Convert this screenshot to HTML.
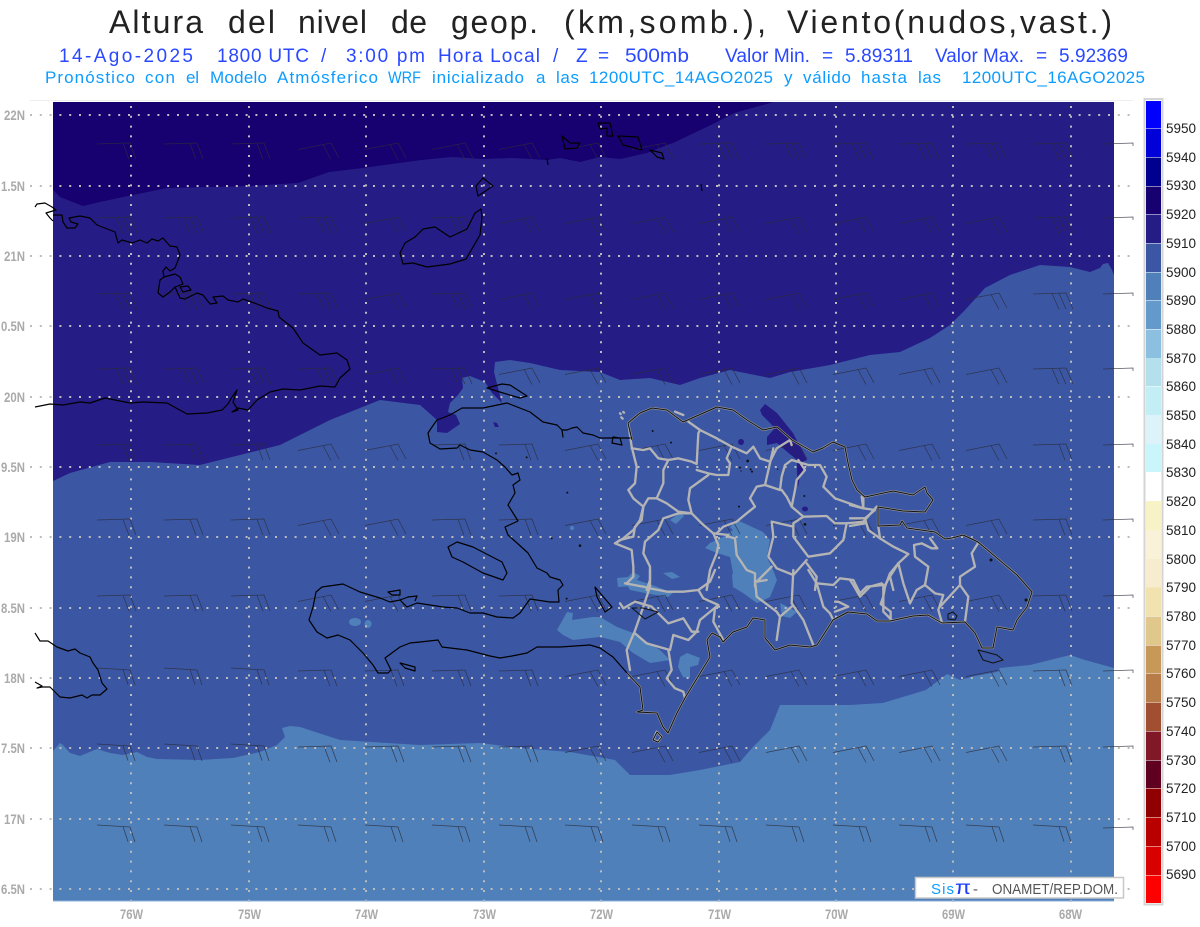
<!DOCTYPE html>
<html lang="es"><head><meta charset="utf-8"><title>Altura del nivel de geop.</title>
<style>html,body{margin:0;padding:0;background:#fff}svg{display:block}text{font-family:"Liberation Sans",sans-serif}
.t1{font-size:32px;fill:#222}.t2{font-size:19px;fill:#2a48ff}.t3{font-size:17px;fill:#0c9cff}
.ax{font-size:13.5px;font-weight:bold;fill:#aaaaaa}.lg{font-size:13.500px;fill:#222}</style></head><body>
<svg width="1200" height="927" viewBox="0 0 1200 927" xmlns="http://www.w3.org/2000/svg">
<defs>
<clipPath id="mc"><rect x="0" y="0" width="1134" height="927"/></clipPath>
<path id="f" d="M-33 1L0 0l6 16M-7 .2l6 16"/>
<path id="h" d="M-33 1L0 0l7 16M-7 .2l7 16M-14 .4l7 16"/>
<path id="u" d="M-33 6.5L0 0l8 15M-8 1.5l8 15"/>
<path id="d" d="M-33-2L0 0l5 15M-7-.4l5 15"/>
<path id="s" d="M-30 1L0 0v3"/>
<g id="r1"><use href="#f" x="130"/><use href="#f" x="197"/><use href="#f" x="264"/><use href="#u" x="331"/><use href="#u" x="398"/><use href="#u" x="465"/><use href="#u" x="532"/><use href="#u" x="598"/><use href="#u" x="665"/><use href="#h" x="732"/><use href="#h" x="799"/><use href="#h" x="866"/><use href="#h" x="932"/><use href="#h" x="999"/><use href="#h" x="1066"/><use href="#s" x="1133"/></g>
<g id="r2"><use href="#h" x="130"/><use href="#h" x="197"/><use href="#h" x="264"/><use href="#h" x="331"/><use href="#u" x="398"/><use href="#h" x="465"/><use href="#u" x="532"/><use href="#u" x="598"/><use href="#u" x="665"/><use href="#u" x="732"/><use href="#u" x="799"/><use href="#u" x="866"/><use href="#u" x="932"/><use href="#u" x="999"/><use href="#h" x="1066"/><use href="#s" x="1133"/></g>
<g id="r3"><use href="#f" x="130"/><use href="#f" x="197"/><use href="#f" x="264"/><use href="#u" x="331"/><use href="#u" x="398"/><use href="#f" x="465"/><use href="#f" x="532"/><use href="#u" x="598"/><use href="#u" x="665"/><use href="#u" x="732"/><use href="#u" x="799"/><use href="#u" x="866"/><use href="#u" x="932"/><use href="#u" x="999"/><use href="#f" x="1066"/><use href="#s" x="1133"/></g>
<g id="r4"><use href="#d" x="130"/><use href="#d" x="197"/><use href="#d" x="264"/><use href="#f" x="331"/><use href="#f" x="398"/><use href="#f" x="465"/><use href="#f" x="532"/><use href="#u" x="598"/><use href="#u" x="665"/><use href="#u" x="732"/><use href="#u" x="799"/><use href="#u" x="866"/><use href="#u" x="932"/><use href="#u" x="999"/><use href="#f" x="1066"/><use href="#s" x="1133"/></g>
<g id="r5"><use href="#d" x="130"/><use href="#d" x="197"/><use href="#d" x="264"/><use href="#d" x="331"/><use href="#d" x="398"/><use href="#d" x="465"/><use href="#d" x="532"/><use href="#d" x="598"/><use href="#d" x="665"/><use href="#d" x="732"/><use href="#d" x="799"/><use href="#d" x="866"/><use href="#d" x="932"/><use href="#d" x="999"/><use href="#d" x="1066"/><use href="#s" x="1133"/></g>
</defs>

<!-- titles -->
<text class="t1" x="109" y="33" textLength="94" lengthAdjust="spacing">Altura</text>
<text class="t1" x="228" y="33" textLength="47" lengthAdjust="spacing">del</text>
<text class="t1" x="298" y="33" textLength="69" lengthAdjust="spacing">nivel</text>
<text class="t1" x="391" y="33" textLength="36" lengthAdjust="spacing">de</text>
<text class="t1" x="451" y="33" textLength="87" lengthAdjust="spacing">geop.</text>
<text class="t1" x="564" y="33" textLength="202" lengthAdjust="spacing">(km,somb.),</text>
<text class="t1" x="787" y="33" textLength="325" lengthAdjust="spacing">Viento(nudos,vast.)</text>

<text class="t2" x="59" y="62" textLength="134" lengthAdjust="spacing">14-Ago-2025</text>
<text class="t2" x="217" y="62" textLength="92" lengthAdjust="spacing">1800 UTC</text>
<text class="t2" x="321" y="62">/</text>
<text class="t2" x="346" y="62" textLength="79" lengthAdjust="spacing">3:00 pm</text>
<text class="t2" x="438" y="62" textLength="102" lengthAdjust="spacing">Hora Local</text>
<text class="t2" x="553" y="62">/</text>
<text class="t2" x="576" y="62">Z</text>
<text class="t2" x="598" y="62">=</text>
<text class="t2" x="625" y="62" textLength="64" lengthAdjust="spacingAndGlyphs">500mb</text>
<text class="t2" x="725" y="62" textLength="85" lengthAdjust="spacingAndGlyphs">Valor Min.</text>
<text class="t2" x="822" y="62">=</text>
<text class="t2" x="845" y="62" textLength="68" lengthAdjust="spacing">5.89311</text>
<text class="t2" x="935" y="62" textLength="89" lengthAdjust="spacingAndGlyphs">Valor Max.</text>
<text class="t2" x="1036" y="62">=</text>
<text class="t2" x="1059" y="62" textLength="69" lengthAdjust="spacing">5.92369</text>

<text class="t3" x="45" y="83" textLength="90" lengthAdjust="spacing">Pronóstico</text>
<text class="t3" x="145" y="83" textLength="30" lengthAdjust="spacing">con</text>
<text class="t3" x="186" y="83" textLength="13" lengthAdjust="spacing">el</text>
<text class="t3" x="210" y="83" textLength="57" lengthAdjust="spacing">Modelo</text>
<text class="t3" x="277" y="83" textLength="101" lengthAdjust="spacing">Atmósferico</text>
<text class="t3" x="388" y="83" textLength="33" lengthAdjust="spacingAndGlyphs">WRF</text>
<text class="t3" x="432" y="83" textLength="92" lengthAdjust="spacing">inicializado</text>
<text class="t3" x="536" y="83" textLength="10" lengthAdjust="spacing">a</text>
<text class="t3" x="556" y="83" textLength="23" lengthAdjust="spacing">las</text>
<text class="t3" x="589" y="83" textLength="184" lengthAdjust="spacing">1200UTC_14AGO2025</text>
<text class="t3" x="784" y="83" textLength="8" lengthAdjust="spacing">y</text>
<text class="t3" x="803" y="83" textLength="48" lengthAdjust="spacing">válido</text>
<text class="t3" x="861" y="83" textLength="46" lengthAdjust="spacing">hasta</text>
<text class="t3" x="918" y="83" textLength="23" lengthAdjust="spacing">las</text>
<text class="t3" x="962" y="83" textLength="183" lengthAdjust="spacing">1200UTC_16AGO2025</text>

<line x1="30" y1="100.500" x2="1133" y2="100.500" stroke="#eeeeee"/>

<!-- contour fills -->
<rect x="53" y="102" width="1061" height="799" fill="#4f80ba"/>
<path fill="#3b57a4" d="M53 102H1114V668L1085 660 1070 655 1030 665 1000 668 997 672 975 676 960 680 947 674 926 690 883 703 850 705 780 705 770 730 753 747 740 762 700 770 670 775 630 775 615 760 570 752 520 748 480 743 420 745 340 740 300 727 290 726 282 728 285 737 277 745 260 752 233 758 200 760 157 759 147 757 137 752 123 755 110 753 97 749 80 756 70 753 63 745 60 743 53 751Z"/>
<path fill="#261c85" d="M53 102H1114V275L1112 270 1108 263 1103 264 1100 268 1090 272 1070 267 1040 265 1010 275 985 288 965 310 950 325 930 338 900 352 870 355 830 365 790 372 770 378 730 370 700 378 680 385 650 378 620 380 600 372 560 370 530 363 510 360 495 362 494 372 498 388 502 403 492 393 485 382 470 376 462 378 463 388 458 395 450 403 448 412 456 415 460 424 447 433 437 432 437 420 428 412 420 405 380 400 330 420 280 445 240 455 200 465 150 462 110 462 70 473 53 481Z"/>
<path fill="#170070" d="M53 102H774L734 113 715 123 673 143 667 145 647 153 620 159 600 157 580 162 560 158 547 160 513 158 482 159 452 157 421 160 363 168 329 172 298 183 250 186 167 188 133 195 100 202 83 206 60 197 53 190Z"/>
<!-- light patches -->
<g fill="#4f80ba">
<path d="M557 630 567 612 573 613 572 620 593 617 600 617 617 627 633 633 660 650 670 660 650 663 633 653 620 642 600 637 573 640 563 635Z"/>
<path d="M678 667 680 657 687 653 700 658 698 665 690 667 690 678 683 677Z"/>
<path d="M730 527 737 520 763 532 770 540 767 557 773 570 777 580 770 597 757 603 743 593 733 587 732 575 733 573 730 557 717 553 705 548 710 543 723 537 733 530Z"/>
<path d="M625 582 637 580 655 586 673 593 668 597 650 594 630 590Z"/>
<path d="M617 578 628 577 633 572 640 576 632 586 618 587Z"/>
<path d="M663 573 672 572 680 577 672 579Z"/>
<path d="M780 603 790 608 797 612 790 618 782 616Z"/>
<path d="M670 520 680 513 684 516 676 524Z"/>
<ellipse cx="355" cy="622" rx="6" ry="4"/><ellipse cx="368" cy="624" rx="3.500" ry="4"/>
<circle cx="572" cy="528" r="2"/>
</g>
<!-- dark patches -->
<g fill="#261c85">
<path d="M760 410 765 404 777 413 793 433 807 460 800 463 805 466 800 476 798 487 797 473 797 460 785 450 777 443 767 445 767 437 775 428 762 415Z"/>
<ellipse cx="741" cy="442" rx="3" ry="3"/><ellipse cx="805" cy="509" rx="3" ry="2.500"/>
<path d="M493 422 497 423 499 427 495 427Z"/>
</g>

<!-- grid -->
<g stroke="#bcbcbc" stroke-width="2" stroke-dasharray="2 7.800" fill="none">
<path d="M30 115H1133M30 186H1133M30 256H1133M30 326H1133M30 397H1133M30 467H1133M30 537H1133M30 608H1133M30 678H1133M30 748H1133M30 819H1133M30 889H1133"/>
<path d="M131 106V912M249 106V912M366 106V912M484 106V912M601 106V912M719 106V912M836 106V912M953 106V912M1071 106V912"/>
</g>
<rect x="53" y="900.500" width="1061" height="1" fill="#8db0da"/>

<!-- wind barbs -->
<g clip-path="url(#mc)" fill="none" stroke="#2c2c3a" stroke-width=".75" stroke-opacity=".8">
<use href="#r1" y="143"/><use href="#r2" y="217"/><use href="#r2" y="293"/><use href="#r2" y="368"/>
<use href="#r3" y="444"/><use href="#r3" y="519"/><use href="#r3" y="595"/><use href="#r4" y="670"/>
<use href="#r4" y="746"/><use href="#r5" y="827"/>
</g>

<!-- province lines -->
<g fill="none" stroke="#b4b4b4" stroke-linejoin="round" stroke-linecap="round">
<g transform="translate(600 390) scale(.33333)" stroke-width="7">
<path d="M265 95 300 120 350 145 395 170 440 190 460 170 480 205 510 215 530 175 570 150 575 165"/>
<path d="M520 175 495 285 470 290 450 325 465 350 440 370 410 395 370 410 350 430"/>
<path d="M95 175 130 180 150 175 175 205 205 210 235 205 275 215 290 222 295 130 300 120"/>
<path d="M205 210 190 240 190 280 170 325 200 340 235 365 275 370"/>
<path d="M290 240 325 250 350 255 385 255 390 220 380 205 395 170"/>
<path d="M325 255 270 295 265 330 275 370 305 400 340 430 385 435"/>
<path d="M170 325 145 325 130 350 125 390 105 410 100 440 60 450 45 460"/>
<path d="M275 370 235 370 190 385 175 420 135 455 130 490 150 530 150 570 140 600"/>
<path d="M340 430 355 465 350 490 330 540 320 600"/>
<path d="M385 440 405 445 410 495 440 540 465 550 465 590"/>
<path d="M495 285 540 300 545 260 555 225 575 210 625 225"/>
<path d="M595 210 615 240 590 270 585 300 575 350"/>
<path d="M545 300 560 320 575 350 610 380 680 378 705 400 740 400 790 395 830 350"/>
<path d="M785 320 790 355 705 325 670 290 680 260 660 225 625 225"/>
<path d="M610 380 580 400 580 440 610 480 625 500 690 490 730 450 740 400"/>
<path d="M580 410 515 395 520 440 505 500 530 535 580 555 620 510"/>
<path d="M515 530 470 575 500 570"/>
<path d="M620 520 650 560 645 600"/>
<path d="M895 520 870 560 880 600"/>
<path d="M85 100 95 170 110 230 105 280 85 300 100 325 130 350 120 390 100 420 70 445 45 460 95 480 100 530 100 560 80 580"/>
<path d="M60 70 62 72M70 66 72 68M64 82 68 86M225 65 250 75"/>
</g>
<g transform="translate(600 570) scale(.33333)" stroke-width="7">
<path d="M75 40 130 50 150 55 200 65 250 65 295 60 330 35 345 0"/>
<path d="M150 0 150 50 130 110 105 182 80 240 90 300"/>
<path d="M295 60 310 85 355 105 300 150 290 185 265 210 220 195 210 240 140 220 105 190"/>
<path d="M205 240 215 300 200 325 225 355 250 365 255 385"/>
<path d="M60 100 70 115 105 95 155 110 205 160 250 145 275 185 295 185"/>
<path d="M345 115 340 155 370 210"/>
<path d="M465 30 470 80 530 125 540 140 530 210"/>
<path d="M580 0 575 100 610 150 640 225M575 110 540 140"/>
<path d="M625 0 650 40 670 110 690 130 700 150"/>
<path d="M650 40 700 45 720 25 760 30 780 70 800 50 850 45 850 125 875 150"/>
<path d="M850 55 880 0M705 95 715 95 745 110 705 125"/>
<path d="M160 510 170 485 185 500 175 515Z"/>
</g>
<g transform="translate(850 450) scale(.33333)" stroke-width="7">
<path d="M0 165 40 175 75 180 45 205 55 240 90 265 130 290 175 312 145 340"/>
<path d="M40 145 40 170M0 205 45 205M0 228 45 220M90 265 85 230"/>
<path d="M145 340 120 370 105 410 95 400 60 410 30 440 10 405 0 390"/>
<path d="M105 410 100 440 92 462 122 485 122 512"/>
<path d="M145 340 160 400 180 460 200 420 225 405 255 430 280 435 265 480 275 515"/>
<path d="M225 405 235 350 195 320 192 285 215 280 245 295 262 295 240 265"/>
<path d="M330 405 355 440 345 515M330 405 270 470M330 405 330 380 375 350 365 310 385 278"/>
</g>
</g>

<!-- coasts -->
<g fill="none" stroke="#000" stroke-width="1.200" stroke-linejoin="round">
<path d="M35 207 37 204 45 203 52 207 56 210 46 213 50 218 53 221"/>
<path d="M53 215 62 215 63 222 67 228 75 228 78 224 71 222 69 218 80 216 90 218 97 225 115 232 118 243 122 240 132 243 140 240 147 243 152 239 158 241 163 238 170 246 177 247 180 255 175 268 170 271 166 267 163 271 164 277 175 274 180 277 183 284 175 287 170 292 163 297 158 293 160 280 164 277M175 287 180 298 185 299 197 293 203 295 210 304 217 303 213 297 223 296 228 300 238 302 243 299 257 304 267 308 278 311 279 317 293 328 303 343 320 355 337 353 347 360 350 369 340 378 335 387 320 386 300 390 283 389 270 392 257 400 248 410 238 408 232 412 238 410 233 402 237 390 232 397 228 404 222 410 207 413 187 414 167 403 143 402 130 403 105 398 90 403 80 402 63 405 50 404 35 407"/>
<path d="M180 287 188 286 191 290 183 292Z"/>
<path d="M35 633 40 641 48 641 57 647 68 651 75 649 80 653 90 657 93 663 98 670 102 683 107 689 100 695 92 695 87 698 82 695 70 698 60 697 50 687 42 687 37 688 42 686 35 682"/>
<path d="M400 253 405 243 415 237 423 229 435 227 450 237 467 229 475 213 481 209 482 217 480 235 466 259 450 264 427 267 413 263 403 264Z"/>
<path d="M476 186 483 178 493 186 478 196Z"/>
<path d="M562 136 570 143 580 143 577 148 565 149Z"/>
<path d="M598 123 610 123 613 136 607 136 607 128 600 129Z"/>
<path d="M618 136 638 137 642 150 623 145Z"/>
<path d="M650 150 662 153 664 159 657 157Z"/>
<path d="M547 158 548 165M701 184 702 191"/>
<path d="M487 388 502 384 510 385 527 396 520 398 503 393Z"/>
<path d="M633 438 620 438 613 437 612 443 622 445 620 438M620 438 600 438 593 435 583 433 577 427 572 428 567 430 562 430 563 437 562 430 557 425 543 422 530 412 507 403 483 408 462 408 450 415 437 420 432 427 428 433 430 443 440 449 457 448 460 445 470 450 483 452 497 460 505 467 512 475 518 473 520 480 513 485 515 493 508 505 513 513 518 521 505 527 508 535 517 543 528 553 537 568 547 573 550 577 560 580 563 585 558 590 559 602 550 602 530 599 520 613 513 618 497 617 483 613 470 613 457 608 443 607 417 603 407 607 400 600 390 602 380 598 370 595 360 592 343 584 322 587 316 592 313 607 309 620 317 632 327 638 338 635 350 640 363 653 373 665 378 673 388 673 391 670 385 658 400 647 410 643 420 642 438 640 442 647 467 650 490 656 500 658 512 656 527 653 537 647 560 647 590 645 600 648 613 657 627 673"/>
<path d="M448 547 457 542 473 547 502 562 507 573 503 580 483 573 463 562 452 557Z"/>
<path d="M595 587 612 607 605 612 597 597Z"/>
<path d="M400 663 415 667 415 671 405 668Z"/>
<path d="M388 592 400 590 400 595 392 595Z"/>
<path d="M400 600 408 597 417 596 415 601"/>
</g>
<g fill="none" stroke-linejoin="round">
<path stroke="#9a9a9a" stroke-width="2.200" d="M627 673 640 687 643 710 637 712 657 713 663 727 668 733 677 713 685 698 707 662 710 657 707 640 712 633 720 637 723 642 733 632 747 627 753 618 765 620 765 638 775 650 790 645 810 647 817 645 833 620 848 612 867 614 877 621 890 621 913 616 928 615 942 623 965 622 975 633 982 648 993 648 997 627 1013 630 1017 620 1027 607 1032 592 1017 575 997 558 978 542 963 535 952 538 945 539 935 532 907 528 902 521 900 525 878 526 878 507 903 511 925 512 933 500 927 493 925 487 913 495 893 491 865 497 857 490 852 480 848 463 845 447 833 442 823 448 813 452 792 440 777 427 763 430 747 420 733 410 717 407 683 422 667 410 652 408 640 413 628 423 632 440"/>
<g stroke="#111" stroke-width="1">
<path d="M627 673 640 687 643 710 637 712 657 713 663 727 668 733 677 713 685 698 707 662 710 657 707 640 712 633 720 637 723 642 733 632 747 627 753 618 765 620 765 638 775 650 790 645 810 647 817 645 833 620 848 612 867 614 877 621 890 621 913 616 928 615 942 623 965 622 975 633 982 648 993 648 997 627 1013 630 1017 620 1027 607 1032 592 1017 575 997 558 978 542 963 535 952 538 945 539 935 532 907 528 902 521 900 525 878 526 878 507 903 511 925 512 933 500 927 493 925 487 913 495 893 491 865 497 857 490 852 480 848 463 845 447 833 442 823 448 813 452 792 440 777 427 763 430 747 420 733 410 717 407 683 422 667 410 652 408 640 413 628 423 632 440"/>
<path d="M978 650 997 655 1003 660 993 663 983 660Z"/>
<path d="M653 740 657 732 662 737 658 742Z"/>
<path d="M948 614 953 612 957 616 955 620 948 619Z"/>
<path d="M632 608 643 608 658 612 645 619Z"/>
</g>
</g>
<g fill="#111">
<g transform="translate(600 390) scale(.33333)">
<circle cx="158" cy="123" r="3"/><circle cx="213" cy="158" r="3"/><circle cx="443" cy="213" r="4"/><circle cx="420" cy="233" r="3"/><circle cx="423" cy="243" r="2"/><circle cx="452" cy="238" r="3"/><circle cx="456" cy="245" r="3"/><circle cx="533" cy="238" r="2"/><circle cx="613" cy="318" r="3"/><circle cx="417" cy="350" r="3"/><circle cx="615" cy="403" r="4"/>
</g>
<g transform="translate(420 370) scale(.33333)">
<circle cx="228" cy="250" r="3"/><circle cx="320" cy="262" r="3"/><circle cx="442" cy="368" r="3"/><circle cx="395" cy="505" r="3"/><circle cx="480" cy="527" r="4"/><circle cx="440" cy="686" r="3"/>
</g>
<circle cx="991" cy="560" r="1.500"/><circle cx="1026" cy="600" r="1.500"/>
</g>

<!-- axis labels -->
<text class="ax" x="4" y="120" textLength="21" lengthAdjust="spacingAndGlyphs">22N</text>
<text class="ax" x="1" y="191" textLength="24" lengthAdjust="spacingAndGlyphs">1.5N</text>
<text class="ax" x="4" y="261" textLength="21" lengthAdjust="spacingAndGlyphs">21N</text>
<text class="ax" x="1" y="331" textLength="24" lengthAdjust="spacingAndGlyphs">0.5N</text>
<text class="ax" x="4" y="402" textLength="21" lengthAdjust="spacingAndGlyphs">20N</text>
<text class="ax" x="1" y="472" textLength="24" lengthAdjust="spacingAndGlyphs">9.5N</text>
<text class="ax" x="4" y="542" textLength="21" lengthAdjust="spacingAndGlyphs">19N</text>
<text class="ax" x="1" y="613" textLength="24" lengthAdjust="spacingAndGlyphs">8.5N</text>
<text class="ax" x="4" y="683" textLength="21" lengthAdjust="spacingAndGlyphs">18N</text>
<text class="ax" x="1" y="753" textLength="24" lengthAdjust="spacingAndGlyphs">7.5N</text>
<text class="ax" x="4" y="824" textLength="21" lengthAdjust="spacingAndGlyphs">17N</text>
<text class="ax" x="1" y="894" textLength="24" lengthAdjust="spacingAndGlyphs">6.5N</text>
<text class="ax" x="120" y="919" textLength="23" lengthAdjust="spacingAndGlyphs">76W</text>
<text class="ax" x="238" y="919" textLength="23" lengthAdjust="spacingAndGlyphs">75W</text>
<text class="ax" x="355" y="919" textLength="23" lengthAdjust="spacingAndGlyphs">74W</text>
<text class="ax" x="473" y="919" textLength="23" lengthAdjust="spacingAndGlyphs">73W</text>
<text class="ax" x="590" y="919" textLength="23" lengthAdjust="spacingAndGlyphs">72W</text>
<text class="ax" x="708" y="919" textLength="23" lengthAdjust="spacingAndGlyphs">71W</text>
<text class="ax" x="825" y="919" textLength="23" lengthAdjust="spacingAndGlyphs">70W</text>
<text class="ax" x="942" y="919" textLength="23" lengthAdjust="spacingAndGlyphs">69W</text>
<text class="ax" x="1059" y="919" textLength="23" lengthAdjust="spacingAndGlyphs">68W</text>

<!-- logo box -->
<rect x="915.500" y="877.500" width="208" height="20.500" fill="#fff" stroke="#c8c8c8" stroke-width="1.500"/>
<text x="931" y="894" font-size="15" fill="#0c9cff" textLength="23" lengthAdjust="spacing">Sis</text>
<text x="955" y="894" font-size="19" fill="#1a3cff" textLength="16" lengthAdjust="spacingAndGlyphs">π</text>
<text x="973" y="894" font-size="15" fill="#555">-</text>
<text x="992" y="894" font-size="15" fill="#555" textLength="126" lengthAdjust="spacingAndGlyphs">ONAMET/REP.DOM.</text>

<!-- colour legend -->
<rect x="1144.500" y="99" width="18" height="805.500" fill="#fff" stroke="#d4d4d4" stroke-width="2"/>
<g>
<rect x="1146" y="101" width="15" height="27" fill="#0000ff"/>
<rect x="1146" y="128.500" width="15" height="28.500" fill="#0000d8"/>
<rect x="1146" y="157.500" width="15" height="28.500" fill="#00008f"/>
<rect x="1146" y="186.500" width="15" height="27.500" fill="#170070"/>
<rect x="1146" y="214.500" width="15" height="28.500" fill="#261c85"/>
<rect x="1146" y="243.500" width="15" height="28.500" fill="#3b57a4"/>
<rect x="1146" y="272.500" width="15" height="27.500" fill="#4f80ba"/>
<rect x="1146" y="300.500" width="15" height="28.500" fill="#6399cb"/>
<rect x="1146" y="329.500" width="15" height="28.500" fill="#8cc0e0"/>
<rect x="1146" y="358" width="15" height="28" fill="#b4e0ee"/>
<rect x="1146" y="386.500" width="15" height="28.500" fill="#c4eef6"/>
<rect x="1146" y="415" width="15" height="29" fill="#dcf3fa"/>
<rect x="1146" y="444" width="15" height="28" fill="#caf6fb"/>
<rect x="1146" y="501" width="15" height="29" fill="#f8f3c6"/>
<rect x="1146" y="530" width="15" height="29" fill="#f9f1d8"/>
<rect x="1146" y="559" width="15" height="28.500" fill="#f7ecce"/>
<rect x="1146" y="587.500" width="15" height="28.500" fill="#f2e2b0"/>
<rect x="1146" y="616.500" width="15" height="28.500" fill="#e0c88c"/>
<rect x="1146" y="645.500" width="15" height="27.500" fill="#c89858"/>
<rect x="1146" y="673.500" width="15" height="28.500" fill="#b87c48"/>
<rect x="1146" y="702.500" width="15" height="28.500" fill="#a05030"/>
<rect x="1146" y="731.500" width="15" height="28.500" fill="#801828"/>
<rect x="1146" y="760.500" width="15" height="27.500" fill="#600020"/>
<rect x="1146" y="788.500" width="15" height="28.500" fill="#900000"/>
<rect x="1146" y="817.500" width="15" height="28.500" fill="#b80000"/>
<rect x="1146" y="846.500" width="15" height="28.500" fill="#d80000"/>
<rect x="1146" y="875.500" width="15" height="27.500" fill="#ff0000"/>
</g>
<text class="lg" x="1166" y="133">5950</text><text class="lg" x="1166" y="162">5940</text><text class="lg" x="1166" y="190">5930</text>
<text class="lg" x="1166" y="219">5920</text><text class="lg" x="1166" y="248">5910</text><text class="lg" x="1166" y="277">5900</text>
<text class="lg" x="1166" y="305">5890</text><text class="lg" x="1166" y="334">5880</text><text class="lg" x="1166" y="363">5870</text>
<text class="lg" x="1166" y="391">5860</text><text class="lg" x="1166" y="420">5850</text><text class="lg" x="1166" y="449">5840</text>
<text class="lg" x="1166" y="477">5830</text><text class="lg" x="1166" y="506">5820</text><text class="lg" x="1166" y="535">5810</text>
<text class="lg" x="1166" y="564">5800</text><text class="lg" x="1166" y="592">5790</text><text class="lg" x="1166" y="621">5780</text>
<text class="lg" x="1166" y="650">5770</text><text class="lg" x="1166" y="678">5760</text><text class="lg" x="1166" y="707">5750</text>
<text class="lg" x="1166" y="736">5740</text><text class="lg" x="1166" y="765">5730</text><text class="lg" x="1166" y="793">5720</text>
<text class="lg" x="1166" y="822">5710</text><text class="lg" x="1166" y="851">5700</text><text class="lg" x="1166" y="879">5690</text>
</svg>
</body></html>
